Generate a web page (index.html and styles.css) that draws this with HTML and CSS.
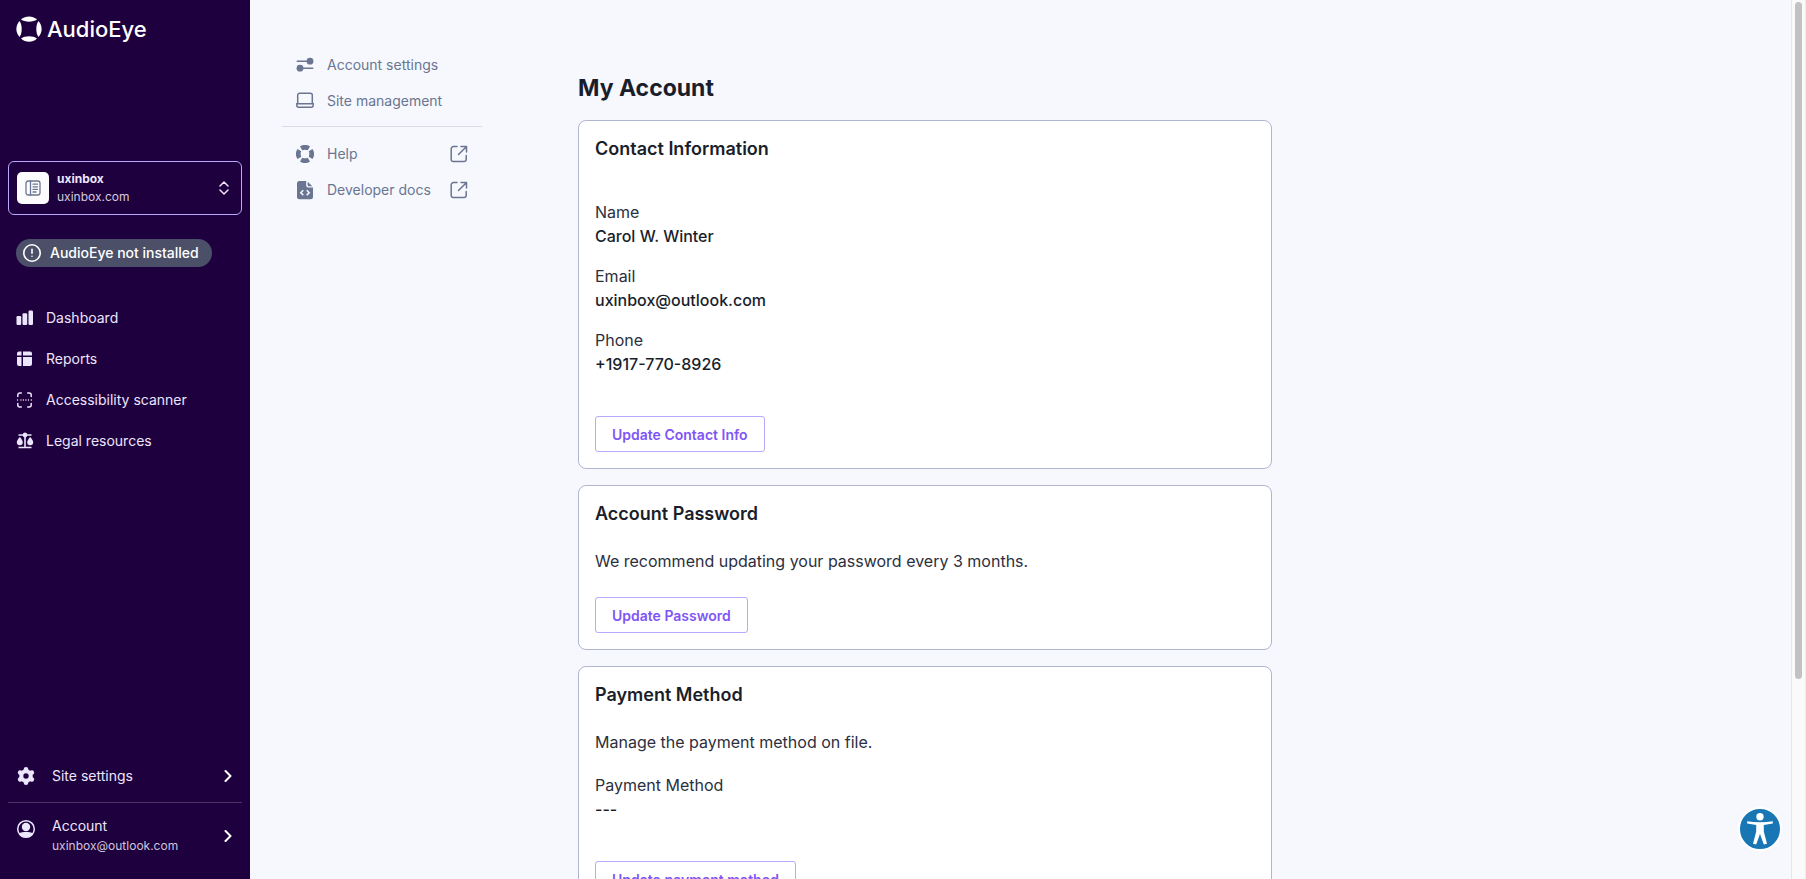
FILE: index.html
```html
<!DOCTYPE html>
<html lang="en">
<head>
<meta charset="utf-8">
<title>My Account - AudioEye</title>
<link rel="stylesheet" href="styles.css">
</head>
<body>
<aside class="sidebar">
  <a class="logo" href="#">
    <svg width="26" height="26" viewBox="0 0 26 26" fill="currentColor" aria-hidden="true"><path d="M5 3.600C9.500-.7 16.500-.7 21 3.600C17 6.400 9 6.400 5 3.600Z"/><path d="M5 22.400C9.500 26.700 16.500 26.700 21 22.400C17 19.600 9 19.600 5 22.400Z"/><path d="M3.600 5C-.7 9.500-.7 16.500 3.600 21C6.400 17 6.400 9 3.600 5Z"/><path d="M22.400 5C26.700 9.500 26.700 16.500 22.400 21C19.600 17 19.600 9 22.400 5Z"/></svg>
    <span>AudioEye</span>
  </a>
  <button class="switcher" type="button">
    <span class="tile"><svg width="16" height="16" viewBox="0 0 16 16" fill="none" stroke="currentColor" stroke-width="1.300" stroke-linecap="round"><rect x="1" y="1" width="14" height="14" rx="2.200"/><path d="M5.500 1v14M8 4.200h4.500M8 6.800h4.500M8 9.400h4.500M8 12h3"/></svg></span>
    <span class="switcher-text"><strong>uxinbox</strong><span>uxinbox.com</span></span>
    <svg width="10" height="14" viewBox="0 0 10 14" fill="none" stroke="currentColor" stroke-width="1.500" stroke-linecap="round" stroke-linejoin="round"><path d="M1 5l4-4 4 4M1 9l4 4 4-4"/></svg>
  </button>
  <div class="pill">
    <svg width="18" height="18" viewBox="0 0 18 18" fill="none" stroke="currentColor" stroke-width="1.600" stroke-linecap="round"><circle cx="9" cy="9" r="8.200"/><path d="M9 5.300v4M9 12.200v.1"/></svg>
    <span>AudioEye not installed</span>
  </div>
  <nav class="menu" aria-label="Main">
    <a href="#"><svg width="18" height="18" viewBox="0 0 18 18" fill="currentColor"><rect x="0.500" y="7" width="4.700" height="9" rx="1.200"/><rect x="6.500" y="4.200" width="4.700" height="11.800" rx="1.200"/><rect x="12.500" y="1.500" width="4.500" height="14.500" rx="1.200"/></svg>Dashboard</a>
    <a href="#"><svg width="18" height="18" viewBox="0 0 18 18" fill="currentColor"><path d="M3 1.500h2.500v4H1v-2a2 2 0 0 1 2-2zM7 1.500h7a2 2 0 0 1 2 2v2H7zM1 7h4.500v9H3a2 2 0 0 1-2-2zM7 7h9v7a2 2 0 0 1-2 2H7z"/></svg>Reports</a>
    <a href="#"><svg width="18" height="18" viewBox="0 0 18 18" fill="none" stroke="currentColor" stroke-width="1.500" stroke-linecap="round"><path d="M1.800 5.500v-1.500a2 2 0 0 1 2-2h1.500M11.700 2h1.500a2 2 0 0 1 2 2v1.500M15.200 12.500v1.500a2 2 0 0 1-2 2h-1.500M5.300 16h-1.500a2 2 0 0 1-2-2v-1.500"/><path stroke-width="1.300" d="M1.500 9h.1M4.900 9h.1M7.400 9h.1M9.900 9h.1M12.400 9h.1M15.300 9h.1"/></svg>Accessibility scanner</a>
    <a href="#"><svg width="18" height="18" viewBox="0 0 18 18" fill="currentColor"><path d="M8.200 4.500h1.600v10.500H8.200zM2.500 2.200h4.200a2.400 2.400 0 0 1 4.600 0h4.200v1.500H11.300a2.400 2.400 0 0 1-4.600 0H2.500zM2.500 14.700h13v1.500h-13zM3.800 5c1.500 1.800 3 3.800 3 5.300a3 2.900 0 0 1-6 0C.8 8.800 2.300 6.800 3.800 5zM14.200 5c1.500 1.800 3 3.800 3 5.300a3 2.900 0 0 1-6 0c0-1.500 1.500-3.500 3-5.300z"/></svg>Legal resources</a>
  </nav>
  <nav class="footer-menu" aria-label="Settings">
    <a class="settings-link" href="#">
      <svg width="20" height="20" viewBox="0 0 20 20"><g fill="currentColor"><circle cx="10" cy="10" r="6.800"/><g stroke="currentColor" stroke-width="4.600" stroke-linejoin="round" stroke-linecap="round"><path d="M10 3.200v13.600M4.100 6.600l11.800 6.800M15.900 6.600L4.100 13.400"/></g></g><circle cx="10" cy="10" r="2.700" fill="#1e003e"/></svg>
      <span class="link-text">Site settings</span>
      <svg class="chevron" width="8" height="12" viewBox="0 0 8 12"><path d="M1.500 1l5 5-5 5"/></svg>
    </a>
    <a class="account-link" href="#">
      <svg class="avatar" width="20" height="20" viewBox="0 0 20 20"><circle cx="10" cy="10" r="8.300" fill="none" stroke="currentColor" stroke-width="1.500"/><circle cx="10" cy="8" r="4.200" fill="currentColor"/><path d="M2.700 14.500c4-1.900 10.600-1.900 14.600 0a8.700 8.700 0 0 1-14.600 0z" fill="currentColor"/></svg>
      <span class="link-text">Account<small>uxinbox@outlook.com</small></span>
      <svg class="chevron" width="8" height="12" viewBox="0 0 8 12"><path d="M1.500 1l5 5-5 5"/></svg>
    </a>
  </nav>
</aside>

<div class="page">
  <nav class="subnav" aria-label="Account">
    <a href="#"><svg width="18" height="18" viewBox="0 0 18 18" fill="currentColor"><path d="M.7 4.500h11v1.500h-11zM6.500 11.500h10.800v1.500H6.500z"/><circle cx="14" cy="5.200" r="3.400"/><circle cx="4" cy="12.200" r="3.400"/></svg><span>Account settings</span></a>
    <a href="#"><svg width="18" height="18" viewBox="0 0 18 18" fill="none" stroke="currentColor" stroke-width="1.500"><path d="M1.700 12V3.200a2 2 0 0 1 2-2h10.600a2 2 0 0 1 2 2V12"/><path d="M.8 11.700h16.400v1.500a2 2 0 0 1-2 2H2.800a2 2 0 0 1-2-2z"/></svg><span>Site management</span></a>
    <hr>
    <a href="#"><svg width="18" height="18" viewBox="0 0 18 18" fill="currentColor"><path d="M4 1.500a9 9 0 0 1 10 0L11.700 5.200a7 7 0 0 0-5.400 0zM4 16.500a9 9 0 0 0 10 0l-2.300-3.700a7 7 0 0 1-5.400 0zM1.500 4a9 9 0 0 0 0 10l3.700-2.300a7 7 0 0 1 0-5.400zM16.500 4a9 9 0 0 1 0 10l-3.700-2.300a7 7 0 0 0 0-5.400z"/></svg><span>Help</span><svg class="external" width="18" height="18" viewBox="0 0 18 18"><path d="M7 1.500H3.500a2.300 2.300 0 0 0-2.300 2.300v10.400a2.300 2.300 0 0 0 2.300 2.300h10.400a2.300 2.300 0 0 0 2.300-2.300V10.500M11 1.500h5.500V7M16.300 1.700L8.500 9.500"/></svg></a>
    <a href="#"><svg width="18" height="20" viewBox="0 0 18 20"><path d="M3.500 1h6.700v4.500a2 2 0 0 0 2 2h4.800V16.700a2.500 2.500 0 0 1-2.500 2.500h-11A2.500 2.500 0 0 1 1 16.700V3.500A2.500 2.500 0 0 1 3.500 1zM11.700 1.700l4.600 4.500h-3.600a1 1 0 0 1-1-1z" fill="currentColor"/><path d="M7.300 10.300L4.800 12.700l2.500 2.400M10.700 10.300l2.500 2.400-2.500 2.400" fill="none" stroke="#f6f8fe" stroke-width="1.500"/></svg><span>Developer docs</span><svg class="external" width="18" height="18" viewBox="0 0 18 18"><path d="M7 1.500H3.500a2.300 2.300 0 0 0-2.300 2.300v10.400a2.300 2.300 0 0 0 2.300 2.300h10.400a2.300 2.300 0 0 0 2.300-2.300V10.500M11 1.500h5.500V7M16.300 1.700L8.500 9.500"/></svg></a>
  </nav>
  <main class="content">
    <h1>My Account</h1>
    <section class="card">
      <h2>Contact Information</h2>
      <dl class="fields">
        <div><dt>Name</dt><dd>Carol W. Winter</dd></div>
        <div><dt>Email</dt><dd>uxinbox@outlook.com</dd></div>
        <div><dt>Phone</dt><dd>+1917-770-8926</dd></div>
      </dl>
      <button class="action" type="button">Update Contact Info</button>
    </section>
    <section class="card">
      <h2>Account Password</h2>
      <p>We recommend updating your password every 3 months.</p>
      <button class="action" type="button">Update Password</button>
    </section>
    <section class="card">
      <h2>Payment Method</h2>
      <p class="intro">Manage the payment method on file.</p>
      <dl class="fields fields-compact">
        <div><dt>Payment Method</dt><dd>---</dd></div>
      </dl>
      <button class="action" type="button">Update payment method</button>
    </section>
  </main>
</div>
<div class="scroll-track" aria-hidden="true"><div class="scroll-thumb"></div></div>
<button class="a11y" type="button" aria-label="Accessibility">
  <svg width="40" height="40" viewBox="0 0 40 40" fill="#fff"><circle cx="20" cy="7.800" r="3.700"/><path d="M7.200 12.200c8 1.300 17.600 1.300 25.600 0v2.300l-9 1.500v6.500l3.200 12.200-3.200.9L20 25l-3.800 10.600-3.200-.9 3.200-12.200V16l-9-1.500z"/></svg>
</button>
</body>
</html>
```
FILE: styles.css
```css
* { box-sizing: border-box; }

body {
  margin: 0;
  height: 100vh;
  display: flex;
  overflow: hidden;
  background: #f6f8fe;
  color: #2b2f40;
  font: 16px/24px Inter, "Liberation Sans", sans-serif;
}

a { color: inherit; text-decoration: none; }
button { font: inherit; cursor: pointer; }
svg { flex: none; }

.sidebar {
  flex: 0 0 250px;
  display: flex;
  flex-direction: column;
  background: #1e003e;
  color: #ece6fc;
  font-size: 14px;
}

.logo {
  display: flex;
  align-items: center;
  gap: 5px;
  height: 58px;
  padding-left: 16px;
  color: #fff;
  font-size: 22px;
  font-weight: 500;
}

.switcher {
  display: flex;
  align-items: center;
  gap: 8px;
  height: 54px;
  margin: 103px 8px 24px;
  padding: 0 12px 0 8px;
  border: 1px solid #b9a8fb;
  border-radius: 6px;
  background: none;
  color: #ece6fc;
  font-size: 12px;
  line-height: 18px;
  text-align: left;
}

.tile {
  display: grid;
  place-items: center;
  width: 32px;
  height: 32px;
  border-radius: 5px;
  background: #fcfcff;
  color: #6b7690;
}

.switcher-text { flex: 1; display: grid; }
.switcher-text span { color: #d3cbdd; }

.pill {
  align-self: flex-start;
  display: flex;
  align-items: center;
  gap: 9px;
  height: 28px;
  margin-left: 16px;
  padding: 0 13px 0 7px;
  border-radius: 14px;
  background: #4b5068;
  color: #fff;
  font-weight: 500;
}

.menu { display: grid; padding: 30px 16px; }
.menu a { display: flex; align-items: center; gap: 12px; height: 41px; }

.footer-menu { margin: auto 8px 0; }
.footer-menu a { display: flex; align-items: center; gap: 16px; padding: 0 10px 0 8px; }
.link-text { flex: 1; line-height: 20px; }
.link-text small { display: block; font-size: 12px; color: #cfc6da; }
.footer-menu .settings-link { height: 52px; padding-bottom: 2px; border-bottom: 1px solid #4b3565; }
.footer-menu .account-link { height: 76px; padding-bottom: 10px; }
.avatar { align-self: flex-start; margin-top: 16px; }
.chevron { fill: none; stroke: #fff; stroke-width: 2; stroke-linecap: round; stroke-linejoin: round; }

.page { flex: 1; display: flex; align-items: flex-start; min-width: 0; padding: 47px 32px 0; }

.subnav { flex: 0 0 200px; color: #6a7591; font-size: 14px; }
.subnav a { display: flex; align-items: center; gap: 13px; height: 36px; padding: 0 14px; }
.subnav span { flex: 1; }
.subnav hr { height: 1px; margin: 7px 0 9px; border: 0; background: #dbdde6; }
.external { fill: none; stroke: currentColor; stroke-width: 1.5; stroke-linecap: round; stroke-linejoin: round; }

.content { flex: 0 1 694px; margin: 25px 0 0 96px; display: grid; gap: 16px; }

h1 { margin: 0; font-size: 23px; line-height: 32px; font-weight: 700; color: #1a1e2b; }
h2 { margin: 0; font-size: 18px; line-height: 23px; font-weight: 600; color: #1a1e2b; }
p { margin: 24px 0; }

.card { padding: 16px; border: 1px solid #b0b5d2; border-radius: 8px; background: #fff; }
.fields { display: grid; gap: 16px; margin: 40px 0; }
.intro { margin-bottom: 0; }
.fields-compact { margin-top: 19px; }
dd { margin: 0; font-weight: 500; color: #1a1e2b; }

.action {
  display: block;
  height: 36px;
  padding: 1px 16px 0;
  border: 1px solid #b9a8fb;
  border-radius: 3px;
  background: #fff;
  color: #8055f5;
  font-size: 14px;
  font-weight: 600;
}

.scroll-track { flex: 0 0 15px; padding: 2px 3px 0; background: #fafafa; border-left: 1px solid #e6e6e8; border-right: 1px solid #ededed; }
.scroll-thumb { height: 77vh; border-radius: 4px; background: #c2c2c2; }

.a11y {
  position: fixed;
  right: 24px;
  bottom: 28px;
  padding: 0;
  border: 2px solid #fff;
  border-radius: 50%;
  background: #1876b5;
}
.a11y svg { display: block; }
```
